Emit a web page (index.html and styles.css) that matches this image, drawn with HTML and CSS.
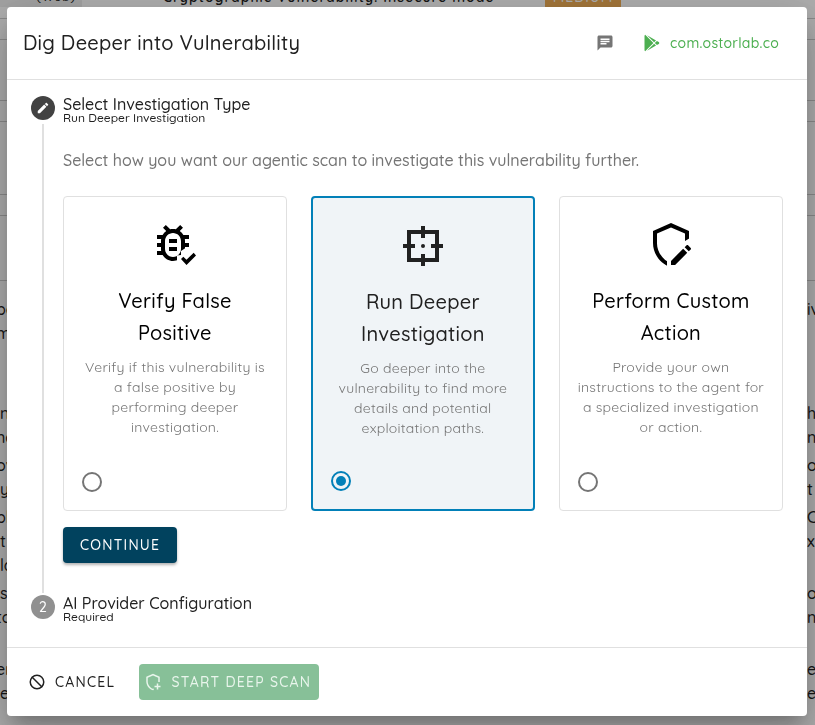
FILE: index.html
```html
<!DOCTYPE html>
<html lang="en">
<head>
<meta charset="utf-8">
<title>Dig Deeper into Vulnerability</title>
<meta name="viewport" content="width=device-width, initial-scale=1">
<link rel="stylesheet" href="styles.css">
</head>
<body>
<div class="page" aria-hidden="true">
  <div class="page-row page-row-top">
    <span class="tag">(Web)</span>
    <span class="finding">Cryptographic Vulnerability: Insecure mode</span>
    <span class="severity">MEDIUM</span>
  </div>
  <div class="page-row row-gap"></div>
  <div class="page-row row-tall"></div>
  <div class="page-row row-gap"></div>
  <div class="page-row row-mid"></div>
  <div class="page-row row-gap"></div>
  <div class="page-row row-last"></div>
  <div class="prose">
    <p><span class="cut">pe</span><span class="tail">iv</span></p>
    <p><span class="cut">m</span></p>
  </div>
  <div class="prose">
    <p><span>n</span><span class="tail">h</span></p>
    <p><span class="cut">ne</span><span class="tail">ni</span></p>
  </div>
  <div class="prose">
    <p><span class="cut">ov</span><span class="tail">o</span></p>
    <p><span>y</span><span class="tail">t</span></p>
  </div>
  <div class="prose">
    <p><span class="cut">pl</span><span class="tail">C</span></p>
    <p><span>t</span><span class="tail">xt</span></p>
    <p><span>ld</span></p>
  </div>
  <div class="prose">
    <p><span>s</span><span class="tail">o</span></p>
    <p><span class="cut">to</span><span class="tail">n</span></p>
  </div>
  <div class="prose">
    <p><span class="cut">er</span><span class="tail">ei</span></p>
    <p><span>e</span><span class="tail">e</span></p>
  </div>
</div>

<div class="overlay">
  <section class="dialog" role="dialog" aria-modal="true" aria-labelledby="dialog-title">
    <header class="dialog-header">
      <h1 id="dialog-title">Dig Deeper into Vulnerability</h1>
      <button class="icon-button" type="button" aria-label="Comments">
        <svg width="18" height="18" viewBox="0 0 24 24"><path d="M20 2H4C2.9 2 2 2.9 2 4V22L6 18H20C21.1 18 22 17.1 22 16V4C22 2.9 21.1 2 20 2M6 9H18V11H6M14 14H6V12H14M18 8H6V6H18"/></svg>
      </button>
      <a class="app-link" href="#">
        <svg width="20" height="20" viewBox="0 0 24 24"><path d="M3,20.5V3.5C3,2.91 3.34,2.39 3.84,2.15L13.69,12L3.84,21.85C3.34,21.6 3,21.09 3,20.5M16.81,15.12L6.05,21.34L14.54,12.85L16.81,15.12M20.16,10.81C20.5,11.08 20.75,11.5 20.75,12C20.75,12.5 20.53,12.9 20.18,13.18L17.89,14.5L15.39,12L17.89,9.5L20.16,10.81M6.05,2.66L16.81,8.88L14.54,11.15L6.05,2.66Z"/></svg>
        <span>com.ostorlab.co</span>
      </a>
    </header>

    <ol class="stepper">
      <li class="step">
        <div class="step-rail">
          <span class="step-marker step-marker-active">
            <svg width="14" height="14" viewBox="0 0 24 24"><path d="M20.71,7.04C21.1,6.65 21.1,6 20.71,5.63L18.37,3.29C18,2.9 17.35,2.9 16.96,3.29L15.12,5.12L18.87,8.87M3,17.25V21H6.75L17.81,9.93L14.06,6.18L3,17.25Z"/></svg>
          </span>
          <span class="step-line"></span>
        </div>
        <div class="step-body">
          <h2 class="step-title">Select Investigation Type</h2>
          <p class="step-note">Run Deeper Investigation</p>
          <p class="lead" id="lead">Select how you want our agentic scan to investigate this vulnerability further.</p>
          <div class="options" role="radiogroup" aria-labelledby="lead">
            <label class="option">
              <svg class="option-icon" width="48" height="48" viewBox="0 0 24 24">
                <clipPath id="bug-cut"><path d="M0 0H24V13H18L15 15V17L13 17.3V24H0Z"/></clipPath>
                <g clip-path="url(#bug-cut)"><path transform="translate(-1 -1)" d="M20 8H17.19C16.74 7.2 16.12 6.5 15.37 6L17 4.41L15.59 3L13.42 5.17C12.96 5.06 12.5 5 12 5C11.5 5 11.05 5.06 10.59 5.17L8.41 3L7 4.41L8.62 6C7.87 6.5 7.26 7.21 6.81 8H4V10H6.09C6.03 10.33 6 10.66 6 11V12H4V14H6V15C6 15.34 6.03 15.67 6.09 16H4V18H6.81C8.47 20.87 12.14 21.84 15 20.18C15.91 19.66 16.67 18.9 17.19 18H20V16H17.91C17.97 15.67 18 15.34 18 15V14H20V12H18V11C18 10.66 17.97 10.33 17.91 10H20V8M16 15C16 17.21 14.21 19 12 19C9.79 19 8 17.21 8 15V11C8 8.79 9.79 7 12 7C14.21 7 16 8.79 16 11V15M14 10V12H10V10H14M10 14H14V16H10V14Z"/></g>
                <path d="M17.75 22L15 19L16.16 17.84L17.75 19.43L21.34 15.84L22.5 17.25L17.75 22"/>
              </svg>
              <span class="option-title">Verify False<br>Positive</span>
              <span class="option-text">Verify if this vulnerability is<br>a false positive by<br>performing deeper<br>investigation.</span>
              <input type="radio" name="investigation" value="verify">
            </label>
            <label class="option option-selected">
              <svg class="option-icon" width="48" height="48" viewBox="0 0 24 24"><path fill-rule="evenodd" d="M11 2H13V4H20V11H22V13H20V20H13V22H11V20H4V13H2V11H4V4H11ZM6 6V11H8V13H6V18H11V16H13V18H18V13H16V11H18V6H13V8H11V6Z"/><circle cx="12" cy="12" r="1"/></svg>
              <span class="option-title">Run Deeper<br>Investigation</span>
              <span class="option-text">Go deeper into the<br>vulnerability to find more<br>details and potential<br>exploitation paths.</span>
              <input type="radio" name="investigation" value="deeper" checked>
            </label>
            <label class="option">
              <svg class="option-icon" width="48" height="48" viewBox="0 0 24 24">
                <clipPath id="shield-cut"><path d="M0 0H24V7L19 10L10 18V24H0Z"/></clipPath>
                <g clip-path="url(#shield-cut)"><path fill-rule="evenodd" d="M21 11C21 16.5 17.2 21.7 12 23C6.8 21.7 3 16.5 3 11V5L12 1L21 5V11M12 21C15.75 20 19 15.5 19 11.2V6.3L12 3.2L5 6.3V11.2C5 15.5 8.25 20 12 21"/></g>
                <path d="M12 19.94V22H14.06L20.12 15.92L18.07 13.88L12 19.94ZM21.85 14.19L20.87 15.17L18.83 13.13L19.81 12.15C20 11.95 20.33 11.95 20.53 12.15L21.85 13.47C22.05 13.67 22.05 14 21.85 14.19"/>
              </svg>
              <span class="option-title">Perform Custom<br>Action</span>
              <span class="option-text">Provide your own<br>instructions to the agent for<br>a specialized investigation<br>or action.</span>
              <input type="radio" name="investigation" value="custom">
            </label>
          </div>
          <button class="button button-primary" type="button">CONTINUE</button>
        </div>
      </li>
      <li class="step">
        <div class="step-rail"><span class="step-marker">2</span></div>
        <div class="step-body step-body-last">
          <h2 class="step-title">AI Provider Configuration</h2>
          <p class="step-note">Required</p>
        </div>
      </li>
    </ol>

    <footer class="dialog-footer">
      <button class="button button-text" type="button">
        <svg width="18" height="18" viewBox="0 0 24 24"><path class="stroke" d="M5 5L19 19"/><circle class="stroke" cx="12" cy="12" r="9"/></svg>
        CANCEL
      </button>
      <button class="button button-success" type="button" disabled>
        <svg width="18" height="18" viewBox="0 0 24 24"><path d="M21 12V5L12 1L3 5V11C3 16.5 6.8 21.7 12 23L13 22.7V20.6L12 21C8.25 20 5 15.5 5 11.2V6.3L12 3.2L19 6.3V12ZM17 14H19V17H22V19H19V22H17V19H14V17H17Z"/></svg>
        START DEEP SCAN
      </button>
    </footer>
  </section>
</div>
</body>
</html>
```
FILE: styles.css
```css
* {
  box-sizing: border-box;
}

body {
  margin: 0;
  min-height: 100vh;
  overflow: hidden;
  background: #fff;
  color: #212121;
  font-family: Quicksand, Lato, sans-serif;
  font-size: 16px;
  font-weight: 500;
}

h1,
h2,
p,
ol {
  margin: 0;
  padding: 0;
  font-weight: 500;
}

svg {
  display: block;
  flex: none;
  fill: currentColor;
}

.stroke {
  fill: none;
  stroke: currentColor;
  stroke-width: 2;
}

/* Page behind the dialog */
.page {
  height: 100vh;
  overflow: hidden;
}

.page-row {
  height: 73px;
  border-bottom: 1px solid #ccc;
}

.page-row-top {
  display: flex;
  align-items: flex-end;
  height: 19px;
  padding-bottom: 11px;
  font-size: 14px;
  line-height: 16px;
  letter-spacing: 1px;
}

.page-row-top > span {
  padding-bottom: 2px;
}

.page-row-top > .tag {
  width: 82px;
  padding-right: 6px;
  background: #eee;
  font-size: 12px;
  text-align: right;
}

.finding {
  flex: 0 0 382px;
  margin-left: 81px;
  font-weight: 600;
  white-space: nowrap;
}

.severity {
  width: 76px;
  background: #f0ad55;
  color: #fff;
  text-align: center;
}

.row-gap {
  height: 21px;
}

.row-tall {
  height: 61px;
}

.row-last {
  height: 65px;
  margin-bottom: 16px;
}

.prose {
  margin-bottom: 4px;
  font-weight: 400;
  line-height: 24px;
}

.prose:nth-of-type(8) {
  margin-bottom: 56px;
}

.prose:nth-of-type(12) {
  margin-bottom: 28px;
}

.prose p {
  display: flex;
  justify-content: space-between;
}

.cut {
  margin-left: -4px;
}

.tail {
  width: 8px;
}

/* Dialog */
.overlay {
  position: fixed;
  inset: 0;
  overflow: auto;
  padding: 7px 8px 8px 7px;
  background: rgba(0, 0, 0, 0.32);
}

.dialog {
  max-width: 1200px;
  margin: 0 auto;
  border-radius: 4px;
  background: #fff;
  box-shadow: 0 11px 15px -7px rgba(0, 0, 0, 0.2),
    0 24px 38px 3px rgba(0, 0, 0, 0.14),
    0 9px 46px 8px rgba(0, 0, 0, 0.12);
}

.dialog-header {
  display: flex;
  align-items: center;
  padding: 20px 28px 20px 16px;
  border-bottom: 1px solid #e0e0e0;
}

.dialog-header h1 {
  flex: 1;
  font-size: 20px;
  line-height: 32px;
  letter-spacing: 0.0125em;
}

.icon-button {
  padding: 0;
  border: 0;
  background: none;
  color: #757575;
}

.app-link {
  display: flex;
  align-items: center;
  gap: 8px;
  margin-left: 28px;
  color: #4caf50;
  font-size: 14px;
  letter-spacing: 0.0179em;
  text-decoration: none;
}

/* Stepper */
.stepper {
  padding: 16px 24px 24px;
  list-style: none;
}

.step {
  display: grid;
  grid-template-columns: 24px 1fr;
  gap: 8px;
}

.step-rail {
  display: flex;
  flex-direction: column;
  align-items: center;
}

.step-marker {
  display: flex;
  align-items: center;
  justify-content: center;
  width: 24px;
  height: 24px;
  border-radius: 50%;
  background: #909090;
  color: #fff;
  font-size: 14px;
}

.step-marker-active {
  background: #424242;
}

.step-line {
  flex: 1;
  width: 2px;
  margin: 4px 0 2px;
  background: #e0e0e0;
}

.step-body {
  padding-bottom: 32px;
}

.step-body-last {
  padding-bottom: 0;
}

.step-title {
  font-size: 16px;
  line-height: 16px;
}

.step-note {
  font-size: 12px;
  line-height: 12px;
}

.lead {
  margin: 24px 0;
  color: #757575;
  line-height: 24px;
}

.options {
  display: grid;
  grid-template-columns: repeat(3, 1fr);
  gap: 24px;
  margin-bottom: 16px;
}

.option {
  display: flex;
  flex-direction: column;
  align-items: center;
  padding: 24px 18px 18px;
  border: 1px solid #e0e0e0;
  border-radius: 4px;
  color: #000;
  text-align: center;
}

.option-selected {
  border: 2px solid #0280b8;
  background: #f0f4f7;
  color: #212121;
}

.option-title {
  margin: 16px 0 8px;
  font-size: 20px;
  line-height: 32px;
  letter-spacing: 0.0125em;
}

.option-text {
  margin-bottom: 33px;
  color: #757575;
  font-size: 14px;
  font-weight: 400;
  line-height: 20px;
  letter-spacing: 0.0179em;
  white-space: nowrap;
}

.option input {
  appearance: none;
  align-self: flex-start;
  width: 20px;
  height: 20px;
  margin: auto 0 0;
  border: 2px solid #757575;
  border-radius: 50%;
}

.option input:checked {
  padding: 3px;
  border-color: #0280b8;
  background: #0280b8 content-box;
}

/* Buttons */
.button {
  display: inline-flex;
  align-items: center;
  gap: 9px;
  height: 36px;
  padding: 0 8px 0 5px;
  border: 0;
  border-radius: 4px;
  font: inherit;
  font-size: 14px;
  letter-spacing: 0.0893em;
}

.button-primary {
  padding: 0 17px;
  background: #01425e;
  color: #fff;
  box-shadow: 0 2px 3px rgba(0, 0, 0, 0.3);
}

.button-text {
  background: none;
  color: #212121;
}

.button-success {
  background: #87c098;
  color: #e9f5ec;
}

.dialog-footer {
  display: flex;
  gap: 16px;
  padding: 16px;
  border-top: 1px solid #e0e0e0;
}
```
